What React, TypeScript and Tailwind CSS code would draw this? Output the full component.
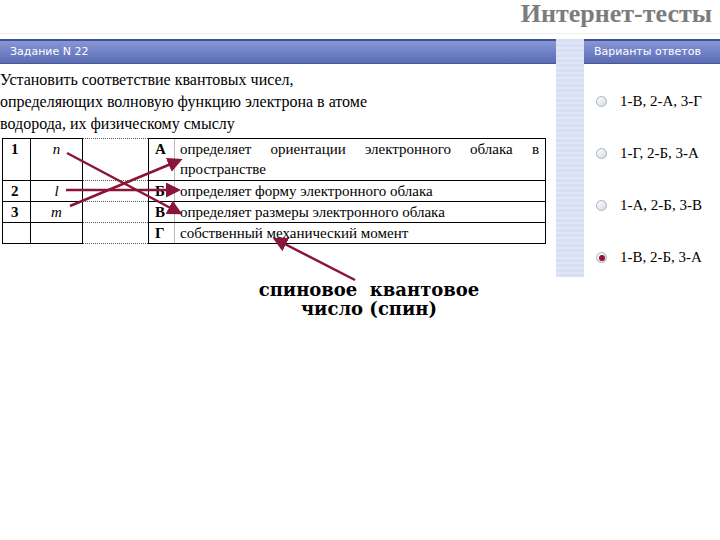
const serif = "font-['Liberation_Serif','Times_New_Roman',serif]";

const answers = [
  { text: "1-В, 2-А, 3-Г", checked: false },
  { text: "1-Г, 2-Б, 3-А", checked: false },
  { text: "1-А, 2-Б, 3-В", checked: false },
  { text: "1-В, 2-Б, 3-А", checked: true },
];

const rows = [
  { num: "1", sym: "n", letter: "А", text: "определяет ориентации электронного облака в пространстве", tall: true },
  { num: "2", sym: "l", letter: "Б", text: "определяет форму электронного облака" },
  { num: "3", sym: "m", letter: "В", text: "определяет размеры электронного облака" },
  { num: "", sym: "", letter: "Г", text: "собственный механический момент" },
];

function Bar({ children }: { children: React.ReactNode }) {
  return (
    <div className="flex h-[25px] items-center border-t-2 border-b border-t-[#3f5096] border-b-[#46569a] bg-gradient-to-b from-[#8797d6] via-[#7181c6] to-[#5b6cb2] px-[10px] font-['DejaVu_Sans',sans-serif] text-[11px] text-white">
      {children}
    </div>
  );
}

function Radio({ checked }: { checked: boolean }) {
  return (
    <span className="flex h-[11px] w-[11px] items-center justify-center rounded-full border border-[#a7b0bf] bg-gradient-to-br from-white to-[#d4dae4]">
      {checked && <span className="h-[6px] w-[6px] rounded-full bg-[#9a0f35]" />}
    </span>
  );
}

export default function App() {
  return (
    <div className="relative h-[540px] w-[720px] overflow-hidden bg-white">
      {/* title */}
      <div className="flex h-[34px] items-start justify-end border-b border-[#f0efec] pr-[8px]">
        <span className={`${serif} text-[26px] font-bold leading-[27px] text-[#7c7c7c]`}>Интернет-тесты</span>
      </div>

      <div className="mt-[5px] flex">
        {/* left: task */}
        <div className="w-[556px]">
          <Bar>Задание N 22</Bar>
          <p className={`${serif} mt-[5px] text-[16px] leading-[22px] text-black`}>
            Установить соответствие квантовых чисел,
            <br />
            определяющих волновую функцию электрона в атоме
            <br />
            водорода, их физическому смыслу
          </p>

          <table className={`${serif} ml-[2px] mt-[3px] w-[544px] border-collapse text-[15px] leading-[20px] text-black`}>
            <tbody>
              {rows.map((r) => (
                <tr key={r.letter} className={r.tall ? "h-[42px]" : "h-[21px]"}>
                  <td className="w-[28px] border border-black px-[8px] align-top font-bold">{r.num}</td>
                  <td className="w-[52px] border border-black text-center align-top italic">{r.sym}</td>
                  <td className="w-[66px] border-y border-dotted border-[#555]" />
                  <td className="w-[26px] border-y border-l border-black pl-[6px] align-top font-bold">{r.letter}</td>
                  <td className="border-y border-r border-black border-l border-l-[#bbb] pl-[5px] pr-[6px] align-top text-justify">
                    {r.text}
                  </td>
                </tr>
              ))}
            </tbody>
          </table>

          <div className="ml-[238px] mt-[36px] w-[262px] whitespace-nowrap text-center font-['DejaVu_Serif',serif] text-[18px] font-bold leading-[19px] text-black">
            спиновое&nbsp; квантовое
            <br />
            число (спин)
          </div>
        </div>

        {/* strip */}
        <div className="h-[238px] w-[28px] bg-[repeating-linear-gradient(180deg,#d7dff3_0px,#d7dff3_3px,#dfe6f7_3px,#dfe6f7_5px)]" />

        {/* right: answers */}
        <div className="flex-1">
          <Bar>Варианты ответов</Bar>
          <div className={`${serif} flex flex-col gap-[31px] pl-[12px] pt-[27px] text-[15px] leading-[21px] text-black`}>
            {answers.map((a) => (
              <div key={a.text} className="flex items-center gap-[13px]">
                <Radio checked={a.checked} />
                <span>{a.text}</span>
              </div>
            ))}
          </div>
        </div>
      </div>

      {/* arrows */}
      <svg className="pointer-events-none absolute left-0 top-0" width="720" height="540">
        <defs>
          <marker id="ah" markerWidth="6" markerHeight="6" refX="4" refY="3" orient="auto" markerUnits="strokeWidth">
            <path d="M0,0 L6,3 L0,6 z" fill="#8a1538" />
          </marker>
        </defs>
        <g stroke="#8a1538" strokeWidth="2.5" fill="none">
          <line x1="67" y1="153" x2="178" y2="212" markerEnd="url(#ah)" />
          <line x1="70" y1="206" x2="178" y2="161" markerEnd="url(#ah)" />
          <line x1="66" y1="190" x2="176" y2="190" markerEnd="url(#ah)" />
          <line x1="355" y1="280" x2="277" y2="240" markerEnd="url(#ah)" />
        </g>
      </svg>
    </div>
  );
}
